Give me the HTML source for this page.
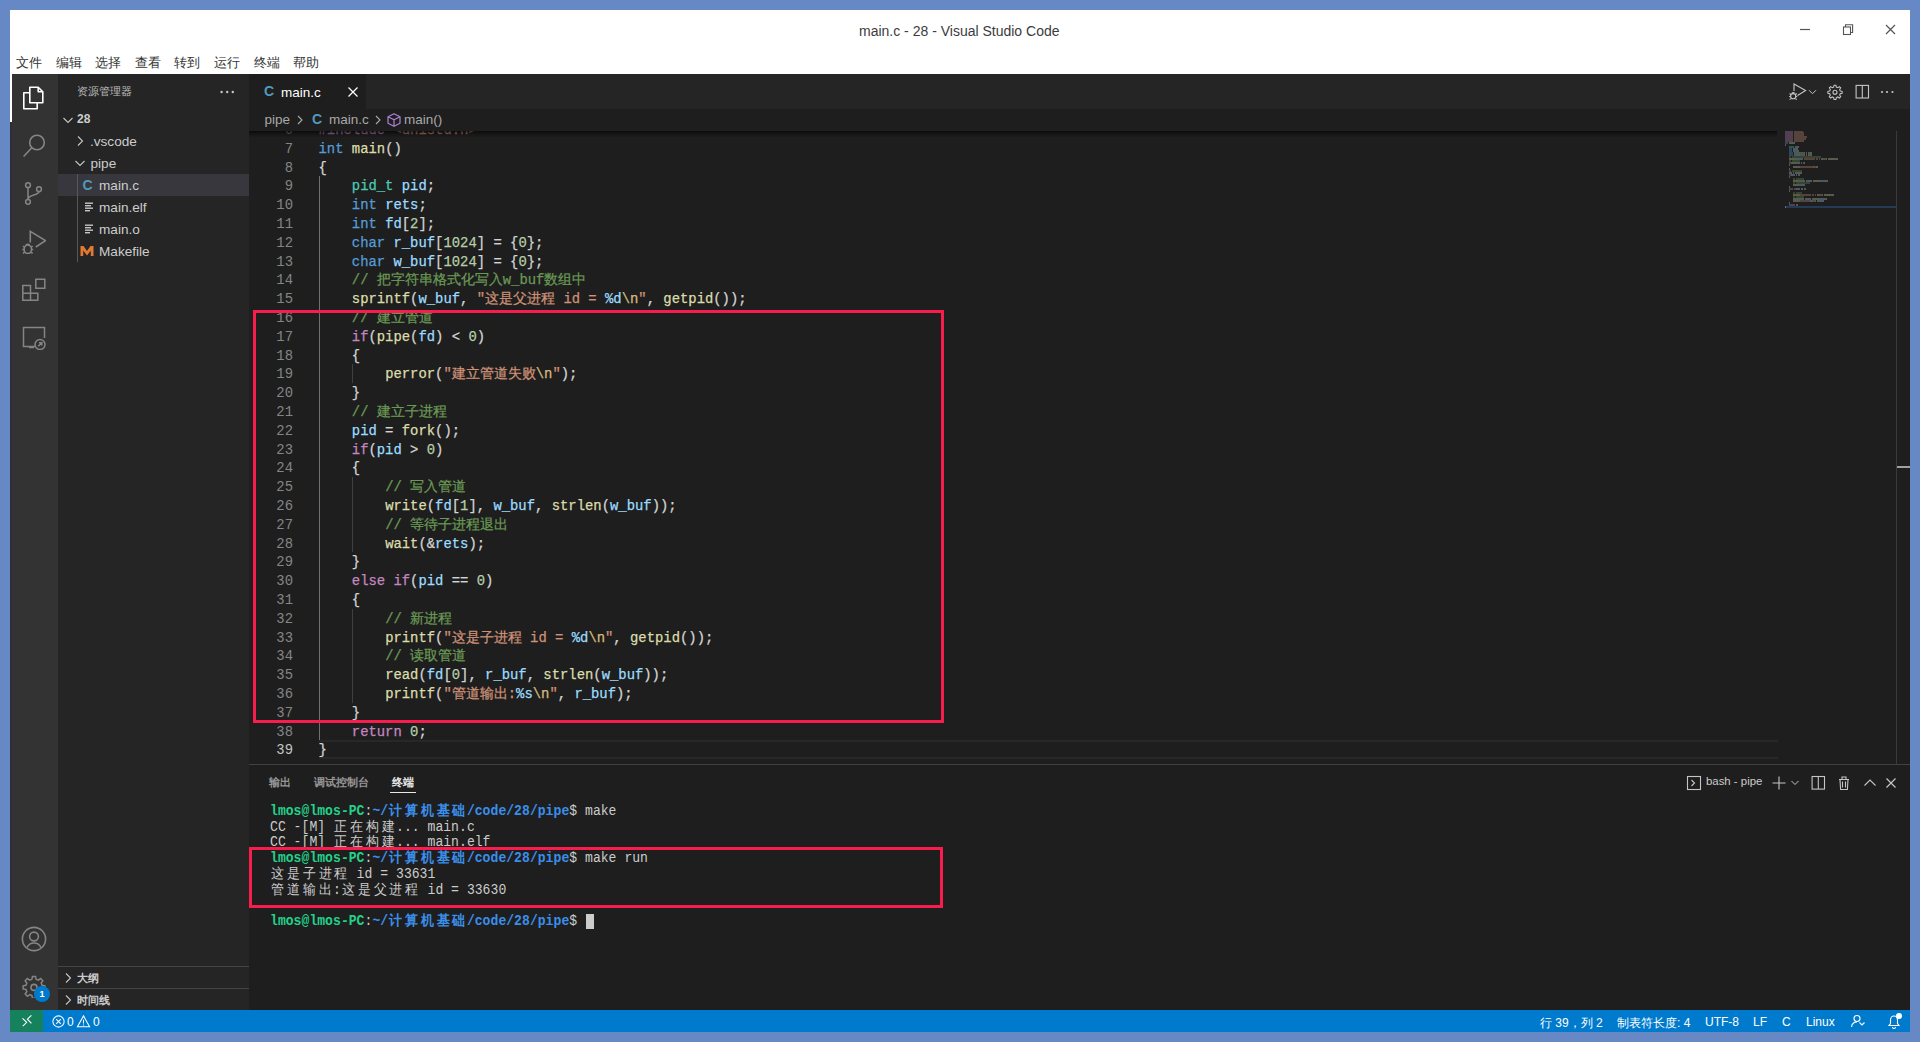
<!DOCTYPE html>
<html><head><meta charset="utf-8">
<style>
*{box-sizing:border-box;margin:0;padding:0}
html,body{width:1920px;height:1042px;overflow:hidden;background:#6689c6;font-family:"Liberation Sans",sans-serif}
.abs{position:absolute}
#win{position:absolute;left:10px;top:10px;width:1900px;height:1022px;background:#1e1e1e;overflow:hidden}
#titlebar{position:absolute;left:0;top:0;width:1900px;height:64px;background:#ffffff}
#title{position:absolute;left:849px;top:13px;font-size:14px;color:#3c3c3c;white-space:nowrap}
.menu{position:absolute;top:43.5px;font-size:13.4px;color:#333;white-space:nowrap}
#actbar{position:absolute;left:0;top:64px;width:48px;height:936px;background:#333333}
#sidebar{position:absolute;left:48px;top:64px;width:191px;height:936px;background:#252526;color:#cccccc;font-size:13.6px}
.row{position:absolute;left:0;width:191px;height:22px;white-space:nowrap}
.row span{position:absolute;top:4px}
#editor{position:absolute;left:239px;top:64px;width:1661px;height:691px;background:#1e1e1e}
#tabs{position:absolute;left:0;top:0;width:1661px;height:35px;background:#252526}
#tab{position:absolute;left:0;top:0;width:117px;height:35px;background:#1e1e1e}
#crumbs{position:absolute;left:0;top:35px;width:1661px;height:22px;background:#1e1e1e;color:#a9a9a9;font-size:13px;white-space:nowrap}
#codeview{position:absolute;left:0;top:57px;width:1661px;height:634px;overflow:hidden}
.ln{position:absolute;left:0;width:44px;height:18.8px;text-align:right;font-family:"Liberation Mono",monospace;font-size:13.88px;line-height:18.8px;padding-top:1px}
.cl{position:absolute;left:69.5px;height:18.8px;white-space:pre;font-family:"Liberation Mono",monospace;font-size:13.88px;line-height:18.8px;padding-top:1px;color:#d4d4d4;-webkit-text-stroke:0.25px currentColor}
#panel{position:absolute;left:239px;top:754px;width:1661px;height:246px;background:#1e1e1e;border-top:1px solid #414141}
.ptab{position:absolute;top:10px;font-size:11px;color:#969696;white-space:nowrap;font-weight:bold}
#term{position:absolute;left:21px;top:38px;width:1600px;height:200px}
.tl{position:absolute;left:0;height:15.7px;width:1600px;transform-origin:0 12px;transform:translateY(1.5px) scaleY(1.08)}
.tc{position:absolute;top:0;height:15.7px;text-align:center;font-family:"Liberation Mono",monospace;font-size:13.1px;line-height:15.7px;white-space:pre}
#status{position:absolute;left:0;top:1000px;width:1900px;height:22px;background:#007acc;color:#ffffff;font-size:12px;white-space:nowrap}
.st{position:absolute;top:5px}
.redbox{position:absolute;border:3px solid #fa1c4c}
</style></head>
<body>
<div id="win">
  <div id="titlebar">
    <div id="title">main.c - 28 - Visual Studio Code</div>
    <div class="menu" style="left:6px">文件</div>
    <div class="menu" style="left:45.6px">编辑</div>
    <div class="menu" style="left:85.2px">选择</div>
    <div class="menu" style="left:124.8px">查看</div>
    <div class="menu" style="left:164.4px">转到</div>
    <div class="menu" style="left:204px">运行</div>
    <div class="menu" style="left:243.6px">终端</div>
    <div class="menu" style="left:283.2px">帮助</div>
    <!-- window controls -->
    <svg class="abs" style="left:1788px;top:14px" width="16" height="16" viewBox="0 0 16 16"><path d="M2 5.5H12" stroke="#555" stroke-width="1.2"/></svg>
    <svg class="abs" style="left:1830px;top:12px" width="16" height="16" viewBox="0 0 16 16" fill="none" stroke="#555" stroke-width="1.1"><rect x="3.5" y="5" width="7" height="7.5"/><path d="M5.5 5V2.8H12.6V10.5H10.5"/></svg>
    <svg class="abs" style="left:1872px;top:12px" width="16" height="16" viewBox="0 0 16 16" stroke="#555" stroke-width="1.2"><path d="M4 3L13 12M13 3L4 12"/></svg>
  </div>

  <div id="actbar"><div class="abs" style="left:0;top:48px;width:2px;height:888px;background:#2c2f3a"></div>
    <div class="abs" style="left:0;top:0;width:2px;height:48px;background:#ffffff"></div>
    <svg class="abs" style="left:12px;top:12px" width="24" height="24" viewBox="0 0 24 24" fill="none" stroke="#ffffff" stroke-width="1.6" stroke-linejoin="round"><path d="M7.8 1.2H16.2L20.8 5.8V16.7H7.8Z"/><path d="M16.2 1.2V5.8H20.8"/><path d="M7.8 6.8H1.8V22.8H15.2V16.7"/></svg>
    <svg class="abs" style="left:12px;top:60px" width="24" height="24" viewBox="0 0 24 24" fill="none" stroke="#858585" stroke-width="1.6"><circle cx="15" cy="8.5" r="7.3"/><path d="M9.8 13.7L1.6 22.5"/></svg>
    <svg class="abs" style="left:12px;top:108px" width="24" height="24" viewBox="0 0 24 24" fill="none" stroke="#858585" stroke-width="1.5"><circle cx="6" cy="3.2" r="2.4"/><circle cx="6" cy="19.8" r="2.4"/><circle cx="17" cy="7.2" r="2.4"/><path d="M6 5.6V17.4M17 9.6C17 13.5 6 12.5 6 17.4"/></svg>
    <svg class="abs" style="left:12px;top:156px" width="24" height="24" viewBox="0 0 24 24" fill="none" stroke="#858585" stroke-width="1.6"><path d="M8.3 12.5V1.4L23.5 10.6L13.8 17"/><ellipse cx="5.8" cy="19.3" rx="3.7" ry="4.3"/><path d="M3.8 15.4Q5.8 13 7.8 15.4M1 16.2L2.5 17.2M10.6 16.2L9.1 17.2M0.4 19.5H2M9.6 19.5H11.2M1 23.4L2.5 22.2M10.6 23.4L9.1 22.2"/></svg>
    <svg class="abs" style="left:12px;top:204px" width="24" height="24" viewBox="0 0 24 24" fill="none" stroke="#858585" stroke-width="1.5"><path d="M0.8 7.5H8.5V15.2H0.8ZM0.8 15.2H8.5V22.2H0.8ZM8.5 15.2H15.8V22.2H8.5Z"/><path d="M13.8 1.2H22.8V10.2H13.8Z"/></svg>
    <svg class="abs" style="left:12px;top:252px" width="24" height="24" viewBox="0 0 24 24" fill="none" stroke="#858585" stroke-width="1.5"><path d="M13 20.5H1.5V1.5H22.5V12"/><path d="M7 21.5H12"/><circle cx="18" cy="18.5" r="5"/><path d="M16.2 20.3L19.8 16.7M17 16.7H19.8V19.5"/></svg>
    <svg class="abs" style="left:10px;top:851px" width="28" height="28" viewBox="0 0 28 28" fill="none" stroke="#858585" stroke-width="1.6"><circle cx="14" cy="14" r="11.6"/><circle cx="14" cy="11.5" r="4.4"/><path d="M7 22.6A7.6 7.6 0 0 1 21 22.6"/></svg>
    <svg class="abs" style="left:11.5px;top:899.5px" width="24" height="24" viewBox="0 0 24 24" fill="none" stroke="#858585" stroke-width="1.6"><path d="M10.3 1.5H13.7L14.3 4.6L16.6 5.6L19.2 3.8L21.6 6.2L19.8 8.8L20.8 11.1L23.8 11.7V15.1L20.8 15.7L19.8 18L21.6 20.6L19.2 23L16.6 21.2L14.3 22.2L13.7 25.3H10.3L9.7 22.2L7.4 21.2L4.8 23L2.4 20.6L4.2 18L3.2 15.7L0.2 15.1V11.7L3.2 11.1L4.2 8.8L2.4 6.2L4.8 3.8L7.4 5.6L9.7 4.6Z" transform="translate(12 13.4) scale(0.92) translate(-12 -13.4)"/><circle cx="12" cy="13.4" r="3"/></svg>
    <div class="abs" style="left:24px;top:912px;width:16px;height:16px;border-radius:8px;background:#007acc;color:#fff;font-size:9px;font-weight:bold;text-align:center;line-height:16px">1</div>
  </div>

  <div id="sidebar">
    <div class="abs" style="left:19px;top:10px;font-size:11px;color:#bbbbbb;white-space:nowrap">资源管理器</div>
    <svg class="abs" style="left:160px;top:10px" width="20" height="16" viewBox="0 0 20 16" fill="#c5c5c5"><circle cx="3.6" cy="8" r="1.2"/><circle cx="9.2" cy="8" r="1.2"/><circle cx="14.8" cy="8" r="1.2"/></svg>
    <div class="row" style="top:34px">
      <svg class="abs" style="left:1.5px;top:3.5px" width="16" height="16" viewBox="0 0 16 16" fill="none" stroke="#c5c5c5" stroke-width="1.1"><path d="M3.5 6L8 10.5L12.5 6"/></svg>
      <span style="left:19px;font-weight:bold;font-size:12px;top:4px">28</span></div>
    <div class="row" style="top:56px">
      <svg class="abs" style="left:14px;top:3px" width="16" height="16" viewBox="0 0 16 16" fill="none" stroke="#c5c5c5" stroke-width="1.1"><path d="M6 3.5L10.5 8L6 12.5"/></svg>
      <span style="left:32px">.vscode</span></div>
    <div class="row" style="top:78px">
      <svg class="abs" style="left:14px;top:3px" width="16" height="16" viewBox="0 0 16 16" fill="none" stroke="#c5c5c5" stroke-width="1.1"><path d="M3.5 6L8 10.5L12.5 6"/></svg>
      <span style="left:32.5px">pipe</span></div>
    <div class="row" style="top:100px;background:#37373d">
      <span style="left:24.5px;color:#519aba;font-weight:bold;font-size:14px;top:2.5px">C</span>
      <span style="left:41px">main.c</span></div>
    <div class="row" style="top:122px">
      <svg class="abs" style="left:26px;top:4.5px" width="12" height="12" viewBox="0 0 12 12" fill="#c5c5c5"><rect x="1" y="1.5" width="8" height="1.4"/><rect x="1" y="4" width="6" height="1.4"/><rect x="1" y="6.5" width="8" height="1.4"/><rect x="1" y="9" width="5" height="1.4"/></svg>
      <span style="left:41px">main.elf</span></div>
    <div class="row" style="top:144px">
      <svg class="abs" style="left:26px;top:4.5px" width="12" height="12" viewBox="0 0 12 12" fill="#c5c5c5"><rect x="1" y="1.5" width="8" height="1.4"/><rect x="1" y="4" width="6" height="1.4"/><rect x="1" y="6.5" width="8" height="1.4"/><rect x="1" y="9" width="5" height="1.4"/></svg>
      <span style="left:41px">main.o</span></div>
    <div class="row" style="top:166px">
      <svg class="abs" style="left:22px;top:5px" width="14" height="12" viewBox="0 0 14 12" fill="#e37933"><path d="M0.5 11V1H3.5L7 6L10.5 1H13.5V11H10.8V5.5L7 10.5L3.2 5.5V11Z"/></svg>
      <span style="left:41px">Makefile</span></div>
    <div class="abs" style="left:19px;top:100px;width:1px;height:88px;background:#585858"></div>
    <div class="abs" style="left:0;top:892px;width:191px;height:1px;background:#454545"></div>
    <div class="row" style="top:893px">
      <svg class="abs" style="left:2px;top:3px" width="16" height="16" viewBox="0 0 16 16" fill="none" stroke="#c5c5c5" stroke-width="1.1"><path d="M6 3.5L10.5 8L6 12.5"/></svg>
      <span style="left:19px;font-weight:bold;font-size:11px;top:4px">大纲</span></div>
    <div class="abs" style="left:0;top:914px;width:191px;height:1px;background:#454545"></div>
    <div class="row" style="top:915px">
      <svg class="abs" style="left:2px;top:3px" width="16" height="16" viewBox="0 0 16 16" fill="none" stroke="#c5c5c5" stroke-width="1.1"><path d="M6 3.5L10.5 8L6 12.5"/></svg>
      <span style="left:19px;font-weight:bold;font-size:11px;top:4px">时间线</span></div>
  </div>

  <div id="editor">
    <div id="tabs">
      <div id="tab">
        <span class="abs" style="left:15px;top:9px;color:#519aba;font-weight:bold;font-size:14px">C</span>
        <span class="abs" style="left:32px;top:10.5px;color:#ffffff;font-size:13.5px">main.c</span>
        <svg class="abs" style="left:96px;top:10px" width="16" height="16" viewBox="0 0 16 16" fill="none" stroke="#ffffff" stroke-width="1.2"><path d="M3.5 3.5L12.5 12.5M12.5 3.5L3.5 12.5"/></svg>
      </div>
      <svg class="abs" style="left:1537px;top:8px" width="22" height="20" viewBox="0 0 22 20" fill="none" stroke="#c5c5c5" stroke-width="1.1"><path d="M8 9V2L19.6 8.5L11.5 13.5"/><circle cx="7.2" cy="14.2" r="2.6"/><path d="M3.6 11.5L5 12.6M10.8 11.5L9.4 12.6M3.2 14.5H4.5M9.9 14.5H11.2M3.6 17.6L5 16.6M10.8 17.6L9.4 16.6M5.8 11.2Q7.2 10 8.6 11.2"/></svg>
      <svg class="abs" style="left:1558px;top:8px" width="12" height="20" viewBox="0 0 12 20" fill="none" stroke="#c5c5c5" stroke-width="1"><path d="M2 8.2L5.5 11.7L9 8.2"/></svg>
      <svg class="abs" style="left:1578.3px;top:10px" width="16" height="16" viewBox="0 0 16 16" fill="none" stroke="#c5c5c5" stroke-width="1.1"><path d="M7 0.8H9L9.4 2.8L10.9 3.4L12.6 2.3L14 3.7L12.9 5.4L13.5 6.9L15.5 7.3V9.3L13.5 9.7L12.9 11.2L14 12.9L12.6 14.3L10.9 13.2L9.4 13.8L9 15.8H7L6.6 13.8L5.1 13.2L3.4 14.3L2 12.9L3.1 11.2L2.5 9.7L0.5 9.3V7.3L2.5 6.9L3.1 5.4L2 3.7L3.4 2.3L5.1 3.4L6.6 2.8Z" transform="translate(8 8.3) scale(0.95) translate(-8 -8.3)"/><circle cx="8" cy="8.3" r="2"/></svg>
      <svg class="abs" style="left:1606px;top:10px" width="16" height="16" viewBox="0 0 16 16" fill="none" stroke="#c5c5c5" stroke-width="1.1"><rect x="1.1" y="1.4" width="12.4" height="12.6"/><path d="M7.3 1.4V14"/></svg>
      <svg class="abs" style="left:1627px;top:10px" width="20" height="16" viewBox="0 0 20 16" fill="#c5c5c5"><circle cx="6" cy="8" r="1.1"/><circle cx="11" cy="8" r="1.1"/><circle cx="16.5" cy="8" r="1.1"/></svg>
    </div>
    <div id="crumbs"><span class="abs" style="left:15.5px;top:2.5px;font-size:13.5px">pipe</span>
      <svg class="abs" style="left:42.5px;top:3px" width="16" height="16" viewBox="0 0 16 16" fill="none" stroke="#a9a9a9" stroke-width="1.1"><path d="M6 4L10 8L6 12"/></svg>
      <span class="abs" style="left:63px;top:2px;color:#519aba;font-weight:bold;font-size:14px">C</span>
      <span class="abs" style="left:80px;top:2.5px;font-size:13.5px">main.c</span>
      <svg class="abs" style="left:121px;top:3px" width="16" height="16" viewBox="0 0 16 16" fill="none" stroke="#a9a9a9" stroke-width="1.1"><path d="M6 4L10 8L6 12"/></svg>
      <svg class="abs" style="left:137px;top:3px" width="16" height="16" viewBox="0 0 16 16" fill="none" stroke="#b180d7" stroke-width="1.2" stroke-linejoin="round"><path d="M8 1.8L14 4.8V11.2L8 14.2L2 11.2V4.8Z"/><path d="M2 4.8L8 7.8L14 4.8M8 7.8V14.2"/></svg>
      <span class="abs" style="left:155px;top:2.5px;font-size:13.5px">main()</span></div>
    <div id="codeview">
      <div style="position:absolute;left:70.00px;top:45.40px;width:1px;height:564.00px;background:#707070"></div><div style="position:absolute;left:103.00px;top:233.40px;width:1px;height:18.80px;background:#404040"></div><div style="position:absolute;left:103.00px;top:346.20px;width:1px;height:75.20px;background:#404040"></div><div style="position:absolute;left:103.00px;top:477.80px;width:1px;height:94.00px;background:#404040"></div>
      <div class="ln" style="top:-11.00px;color:#858585;opacity:.75">6</div><div class="cl" style="top:-11.00px;opacity:.75"><span style="color:#c586c0">#include</span><span style="color:#d4d4d4"> </span><span style="color:#ce9178">&lt;unistd.h&gt;</span></div>
<div class="ln" style="top:7.80px;color:#858585">7</div><div class="cl" style="top:7.80px"><span style="color:#569cd6">int</span><span style="color:#d4d4d4"> </span><span style="color:#dcdcaa">main</span><span style="color:#d4d4d4">()</span></div>
<div class="ln" style="top:26.60px;color:#858585">8</div><div class="cl" style="top:26.60px"><span style="color:#d4d4d4">{</span></div>
<div class="ln" style="top:45.40px;color:#858585">9</div><div class="cl" style="top:45.40px"><span style="color:#d4d4d4">    </span><span style="color:#4ec9b0">pid_t</span><span style="color:#d4d4d4"> </span><span style="color:#9cdcfe">pid</span><span style="color:#d4d4d4">;</span></div>
<div class="ln" style="top:64.20px;color:#858585">10</div><div class="cl" style="top:64.20px"><span style="color:#d4d4d4">    </span><span style="color:#569cd6">int</span><span style="color:#d4d4d4"> </span><span style="color:#9cdcfe">rets</span><span style="color:#d4d4d4">;</span></div>
<div class="ln" style="top:83.00px;color:#858585">11</div><div class="cl" style="top:83.00px"><span style="color:#d4d4d4">    </span><span style="color:#569cd6">int</span><span style="color:#d4d4d4"> </span><span style="color:#9cdcfe">fd</span><span style="color:#d4d4d4">[</span><span style="color:#b5cea8">2</span><span style="color:#d4d4d4">];</span></div>
<div class="ln" style="top:101.80px;color:#858585">12</div><div class="cl" style="top:101.80px"><span style="color:#d4d4d4">    </span><span style="color:#569cd6">char</span><span style="color:#d4d4d4"> </span><span style="color:#9cdcfe">r_buf</span><span style="color:#d4d4d4">[</span><span style="color:#b5cea8">1024</span><span style="color:#d4d4d4">] = {</span><span style="color:#b5cea8">0</span><span style="color:#d4d4d4">};</span></div>
<div class="ln" style="top:120.60px;color:#858585">13</div><div class="cl" style="top:120.60px"><span style="color:#d4d4d4">    </span><span style="color:#569cd6">char</span><span style="color:#d4d4d4"> </span><span style="color:#9cdcfe">w_buf</span><span style="color:#d4d4d4">[</span><span style="color:#b5cea8">1024</span><span style="color:#d4d4d4">] = {</span><span style="color:#b5cea8">0</span><span style="color:#d4d4d4">};</span></div>
<div class="ln" style="top:139.40px;color:#858585">14</div><div class="cl" style="top:139.40px"><span style="color:#d4d4d4">    </span><span style="color:#6a9955">// 把字符串格式化写入w_buf数组中</span></div>
<div class="ln" style="top:158.20px;color:#858585">15</div><div class="cl" style="top:158.20px"><span style="color:#d4d4d4">    </span><span style="color:#dcdcaa">sprintf</span><span style="color:#d4d4d4">(</span><span style="color:#9cdcfe">w_buf</span><span style="color:#d4d4d4">, </span><span style="color:#ce9178">&quot;这是父进程 id = </span><span style="color:#9cdcfe">%d</span><span style="color:#d7ba7d">\n</span><span style="color:#ce9178">&quot;</span><span style="color:#d4d4d4">, </span><span style="color:#dcdcaa">getpid</span><span style="color:#d4d4d4">());</span></div>
<div class="ln" style="top:177.00px;color:#858585">16</div><div class="cl" style="top:177.00px"><span style="color:#d4d4d4">    </span><span style="color:#6a9955">// 建立管道</span></div>
<div class="ln" style="top:195.80px;color:#858585">17</div><div class="cl" style="top:195.80px"><span style="color:#d4d4d4">    </span><span style="color:#c586c0">if</span><span style="color:#d4d4d4">(</span><span style="color:#dcdcaa">pipe</span><span style="color:#d4d4d4">(</span><span style="color:#9cdcfe">fd</span><span style="color:#d4d4d4">) &lt; </span><span style="color:#b5cea8">0</span><span style="color:#d4d4d4">)</span></div>
<div class="ln" style="top:214.60px;color:#858585">18</div><div class="cl" style="top:214.60px"><span style="color:#d4d4d4">    {</span></div>
<div class="ln" style="top:233.40px;color:#858585">19</div><div class="cl" style="top:233.40px"><span style="color:#d4d4d4">        </span><span style="color:#dcdcaa">perror</span><span style="color:#d4d4d4">(</span><span style="color:#ce9178">&quot;建立管道失败</span><span style="color:#d7ba7d">\n</span><span style="color:#ce9178">&quot;</span><span style="color:#d4d4d4">);</span></div>
<div class="ln" style="top:252.20px;color:#858585">20</div><div class="cl" style="top:252.20px"><span style="color:#d4d4d4">    }</span></div>
<div class="ln" style="top:271.00px;color:#858585">21</div><div class="cl" style="top:271.00px"><span style="color:#d4d4d4">    </span><span style="color:#6a9955">// 建立子进程</span></div>
<div class="ln" style="top:289.80px;color:#858585">22</div><div class="cl" style="top:289.80px"><span style="color:#d4d4d4">    </span><span style="color:#9cdcfe">pid</span><span style="color:#d4d4d4"> = </span><span style="color:#dcdcaa">fork</span><span style="color:#d4d4d4">();</span></div>
<div class="ln" style="top:308.60px;color:#858585">23</div><div class="cl" style="top:308.60px"><span style="color:#d4d4d4">    </span><span style="color:#c586c0">if</span><span style="color:#d4d4d4">(</span><span style="color:#9cdcfe">pid</span><span style="color:#d4d4d4"> &gt; </span><span style="color:#b5cea8">0</span><span style="color:#d4d4d4">)</span></div>
<div class="ln" style="top:327.40px;color:#858585">24</div><div class="cl" style="top:327.40px"><span style="color:#d4d4d4">    {</span></div>
<div class="ln" style="top:346.20px;color:#858585">25</div><div class="cl" style="top:346.20px"><span style="color:#d4d4d4">        </span><span style="color:#6a9955">// 写入管道</span></div>
<div class="ln" style="top:365.00px;color:#858585">26</div><div class="cl" style="top:365.00px"><span style="color:#d4d4d4">        </span><span style="color:#dcdcaa">write</span><span style="color:#d4d4d4">(</span><span style="color:#9cdcfe">fd</span><span style="color:#d4d4d4">[</span><span style="color:#b5cea8">1</span><span style="color:#d4d4d4">], </span><span style="color:#9cdcfe">w_buf</span><span style="color:#d4d4d4">, </span><span style="color:#dcdcaa">strlen</span><span style="color:#d4d4d4">(</span><span style="color:#9cdcfe">w_buf</span><span style="color:#d4d4d4">));</span></div>
<div class="ln" style="top:383.80px;color:#858585">27</div><div class="cl" style="top:383.80px"><span style="color:#d4d4d4">        </span><span style="color:#6a9955">// 等待子进程退出</span></div>
<div class="ln" style="top:402.60px;color:#858585">28</div><div class="cl" style="top:402.60px"><span style="color:#d4d4d4">        </span><span style="color:#dcdcaa">wait</span><span style="color:#d4d4d4">(&amp;</span><span style="color:#9cdcfe">rets</span><span style="color:#d4d4d4">);</span></div>
<div class="ln" style="top:421.40px;color:#858585">29</div><div class="cl" style="top:421.40px"><span style="color:#d4d4d4">    }</span></div>
<div class="ln" style="top:440.20px;color:#858585">30</div><div class="cl" style="top:440.20px"><span style="color:#d4d4d4">    </span><span style="color:#c586c0">else</span><span style="color:#d4d4d4"> </span><span style="color:#c586c0">if</span><span style="color:#d4d4d4">(</span><span style="color:#9cdcfe">pid</span><span style="color:#d4d4d4"> == </span><span style="color:#b5cea8">0</span><span style="color:#d4d4d4">)</span></div>
<div class="ln" style="top:459.00px;color:#858585">31</div><div class="cl" style="top:459.00px"><span style="color:#d4d4d4">    {</span></div>
<div class="ln" style="top:477.80px;color:#858585">32</div><div class="cl" style="top:477.80px"><span style="color:#d4d4d4">        </span><span style="color:#6a9955">// 新进程</span></div>
<div class="ln" style="top:496.60px;color:#858585">33</div><div class="cl" style="top:496.60px"><span style="color:#d4d4d4">        </span><span style="color:#dcdcaa">printf</span><span style="color:#d4d4d4">(</span><span style="color:#ce9178">&quot;这是子进程 id = </span><span style="color:#9cdcfe">%d</span><span style="color:#d7ba7d">\n</span><span style="color:#ce9178">&quot;</span><span style="color:#d4d4d4">, </span><span style="color:#dcdcaa">getpid</span><span style="color:#d4d4d4">());</span></div>
<div class="ln" style="top:515.40px;color:#858585">34</div><div class="cl" style="top:515.40px"><span style="color:#d4d4d4">        </span><span style="color:#6a9955">// 读取管道</span></div>
<div class="ln" style="top:534.20px;color:#858585">35</div><div class="cl" style="top:534.20px"><span style="color:#d4d4d4">        </span><span style="color:#dcdcaa">read</span><span style="color:#d4d4d4">(</span><span style="color:#9cdcfe">fd</span><span style="color:#d4d4d4">[</span><span style="color:#b5cea8">0</span><span style="color:#d4d4d4">], </span><span style="color:#9cdcfe">r_buf</span><span style="color:#d4d4d4">, </span><span style="color:#dcdcaa">strlen</span><span style="color:#d4d4d4">(</span><span style="color:#9cdcfe">w_buf</span><span style="color:#d4d4d4">));</span></div>
<div class="ln" style="top:553.00px;color:#858585">36</div><div class="cl" style="top:553.00px"><span style="color:#d4d4d4">        </span><span style="color:#dcdcaa">printf</span><span style="color:#d4d4d4">(</span><span style="color:#ce9178">&quot;管道输出:</span><span style="color:#9cdcfe">%s</span><span style="color:#d7ba7d">\n</span><span style="color:#ce9178">&quot;</span><span style="color:#d4d4d4">, </span><span style="color:#9cdcfe">r_buf</span><span style="color:#d4d4d4">);</span></div>
<div class="ln" style="top:571.80px;color:#858585">37</div><div class="cl" style="top:571.80px"><span style="color:#d4d4d4">    }</span></div>
<div class="ln" style="top:590.60px;color:#858585">38</div><div class="cl" style="top:590.60px"><span style="color:#d4d4d4">    </span><span style="color:#c586c0">return</span><span style="color:#d4d4d4"> </span><span style="color:#b5cea8">0</span><span style="color:#d4d4d4">;</span></div>
<div class="ln" style="top:609.40px;color:#c6c6c6">39</div><div class="cl" style="top:609.40px"><span style="color:#d4d4d4">}</span></div>
      <div style="position:absolute;left:70px;top:609.3px;width:1459px;height:19px;border-top:2px solid #282828;border-bottom:2px solid #282828"></div>
      <div style="position:absolute;left:1647px;top:0;width:1px;height:634px;background:#3a3a3a"></div>
      <div style="position:absolute;left:1648px;top:335px;width:13px;height:2px;background:#a0a0a0"></div>
      <div style="position:absolute;left:1536px;top:74.5px;width:111px;height:2px;background:#264f78;opacity:.6"></div>
      <div id="mm" style="position:absolute;left:0;top:0"><div style="position:absolute;left:1536px;top:-1px;width:8px;height:2px;background:#c586c0;opacity:.32"></div><div style="position:absolute;left:1545px;top:-1px;width:9px;height:2px;background:#ce9178;opacity:.32"></div><div style="position:absolute;left:1536px;top:1px;width:8px;height:2px;background:#c586c0;opacity:.32"></div><div style="position:absolute;left:1545px;top:1px;width:10px;height:2px;background:#ce9178;opacity:.32"></div><div style="position:absolute;left:1536px;top:3px;width:8px;height:2px;background:#c586c0;opacity:.32"></div><div style="position:absolute;left:1545px;top:3px;width:10px;height:2px;background:#ce9178;opacity:.32"></div><div style="position:absolute;left:1536px;top:5px;width:8px;height:2px;background:#c586c0;opacity:.32"></div><div style="position:absolute;left:1545px;top:5px;width:13px;height:2px;background:#ce9178;opacity:.32"></div><div style="position:absolute;left:1536px;top:7px;width:8px;height:2px;background:#c586c0;opacity:.32"></div><div style="position:absolute;left:1545px;top:7px;width:12px;height:2px;background:#ce9178;opacity:.32"></div><div style="position:absolute;left:1536px;top:9px;width:8px;height:2px;background:#c586c0;opacity:.32"></div><div style="position:absolute;left:1545px;top:9px;width:10px;height:2px;background:#ce9178;opacity:.32"></div><div style="position:absolute;left:1536px;top:11px;width:3px;height:2px;background:#569cd6;opacity:.32"></div><div style="position:absolute;left:1540px;top:11px;width:4px;height:2px;background:#dcdcaa;opacity:.32"></div><div style="position:absolute;left:1544px;top:11px;width:2px;height:2px;background:#d4d4d4;opacity:.32"></div><div style="position:absolute;left:1536px;top:13px;width:1px;height:2px;background:#d4d4d4;opacity:.32"></div><div style="position:absolute;left:1540px;top:15px;width:5px;height:2px;background:#4ec9b0;opacity:.32"></div><div style="position:absolute;left:1546px;top:15px;width:3px;height:2px;background:#9cdcfe;opacity:.32"></div><div style="position:absolute;left:1549px;top:15px;width:1px;height:2px;background:#d4d4d4;opacity:.32"></div><div style="position:absolute;left:1540px;top:17px;width:3px;height:2px;background:#569cd6;opacity:.32"></div><div style="position:absolute;left:1544px;top:17px;width:4px;height:2px;background:#9cdcfe;opacity:.32"></div><div style="position:absolute;left:1548px;top:17px;width:1px;height:2px;background:#d4d4d4;opacity:.32"></div><div style="position:absolute;left:1540px;top:19px;width:3px;height:2px;background:#569cd6;opacity:.32"></div><div style="position:absolute;left:1544px;top:19px;width:2px;height:2px;background:#9cdcfe;opacity:.32"></div><div style="position:absolute;left:1546px;top:19px;width:1px;height:2px;background:#d4d4d4;opacity:.32"></div><div style="position:absolute;left:1547px;top:19px;width:1px;height:2px;background:#b5cea8;opacity:.32"></div><div style="position:absolute;left:1548px;top:19px;width:2px;height:2px;background:#d4d4d4;opacity:.32"></div><div style="position:absolute;left:1540px;top:21px;width:4px;height:2px;background:#569cd6;opacity:.32"></div><div style="position:absolute;left:1545px;top:21px;width:5px;height:2px;background:#9cdcfe;opacity:.32"></div><div style="position:absolute;left:1550px;top:21px;width:1px;height:2px;background:#d4d4d4;opacity:.32"></div><div style="position:absolute;left:1551px;top:21px;width:4px;height:2px;background:#b5cea8;opacity:.32"></div><div style="position:absolute;left:1555px;top:21px;width:1px;height:2px;background:#d4d4d4;opacity:.32"></div><div style="position:absolute;left:1557px;top:21px;width:1px;height:2px;background:#d4d4d4;opacity:.32"></div><div style="position:absolute;left:1559px;top:21px;width:1px;height:2px;background:#d4d4d4;opacity:.32"></div><div style="position:absolute;left:1560px;top:21px;width:1px;height:2px;background:#b5cea8;opacity:.32"></div><div style="position:absolute;left:1561px;top:21px;width:2px;height:2px;background:#d4d4d4;opacity:.32"></div><div style="position:absolute;left:1540px;top:23px;width:4px;height:2px;background:#569cd6;opacity:.32"></div><div style="position:absolute;left:1545px;top:23px;width:5px;height:2px;background:#9cdcfe;opacity:.32"></div><div style="position:absolute;left:1550px;top:23px;width:1px;height:2px;background:#d4d4d4;opacity:.32"></div><div style="position:absolute;left:1551px;top:23px;width:4px;height:2px;background:#b5cea8;opacity:.32"></div><div style="position:absolute;left:1555px;top:23px;width:1px;height:2px;background:#d4d4d4;opacity:.32"></div><div style="position:absolute;left:1557px;top:23px;width:1px;height:2px;background:#d4d4d4;opacity:.32"></div><div style="position:absolute;left:1559px;top:23px;width:1px;height:2px;background:#d4d4d4;opacity:.32"></div><div style="position:absolute;left:1560px;top:23px;width:1px;height:2px;background:#b5cea8;opacity:.32"></div><div style="position:absolute;left:1561px;top:23px;width:2px;height:2px;background:#d4d4d4;opacity:.32"></div><div style="position:absolute;left:1540px;top:25px;width:2px;height:2px;background:#6a9955;opacity:.32"></div><div style="position:absolute;left:1543px;top:25px;width:29px;height:2px;background:#6a9955;opacity:.32"></div><div style="position:absolute;left:1540px;top:27px;width:7px;height:2px;background:#dcdcaa;opacity:.32"></div><div style="position:absolute;left:1547px;top:27px;width:1px;height:2px;background:#d4d4d4;opacity:.32"></div><div style="position:absolute;left:1548px;top:27px;width:5px;height:2px;background:#9cdcfe;opacity:.32"></div><div style="position:absolute;left:1553px;top:27px;width:1px;height:2px;background:#d4d4d4;opacity:.32"></div><div style="position:absolute;left:1555px;top:27px;width:11px;height:2px;background:#ce9178;opacity:.32"></div><div style="position:absolute;left:1567px;top:27px;width:2px;height:2px;background:#ce9178;opacity:.32"></div><div style="position:absolute;left:1570px;top:27px;width:1px;height:2px;background:#ce9178;opacity:.32"></div><div style="position:absolute;left:1572px;top:27px;width:2px;height:2px;background:#9cdcfe;opacity:.32"></div><div style="position:absolute;left:1574px;top:27px;width:2px;height:2px;background:#d7ba7d;opacity:.32"></div><div style="position:absolute;left:1576px;top:27px;width:1px;height:2px;background:#ce9178;opacity:.32"></div><div style="position:absolute;left:1577px;top:27px;width:1px;height:2px;background:#d4d4d4;opacity:.32"></div><div style="position:absolute;left:1579px;top:27px;width:6px;height:2px;background:#dcdcaa;opacity:.32"></div><div style="position:absolute;left:1585px;top:27px;width:4px;height:2px;background:#d4d4d4;opacity:.32"></div><div style="position:absolute;left:1540px;top:29px;width:2px;height:2px;background:#6a9955;opacity:.32"></div><div style="position:absolute;left:1543px;top:29px;width:8px;height:2px;background:#6a9955;opacity:.32"></div><div style="position:absolute;left:1540px;top:31px;width:2px;height:2px;background:#c586c0;opacity:.32"></div><div style="position:absolute;left:1542px;top:31px;width:1px;height:2px;background:#d4d4d4;opacity:.32"></div><div style="position:absolute;left:1543px;top:31px;width:4px;height:2px;background:#dcdcaa;opacity:.32"></div><div style="position:absolute;left:1547px;top:31px;width:1px;height:2px;background:#d4d4d4;opacity:.32"></div><div style="position:absolute;left:1548px;top:31px;width:2px;height:2px;background:#9cdcfe;opacity:.32"></div><div style="position:absolute;left:1550px;top:31px;width:1px;height:2px;background:#d4d4d4;opacity:.32"></div><div style="position:absolute;left:1552px;top:31px;width:1px;height:2px;background:#d4d4d4;opacity:.32"></div><div style="position:absolute;left:1554px;top:31px;width:1px;height:2px;background:#b5cea8;opacity:.32"></div><div style="position:absolute;left:1555px;top:31px;width:1px;height:2px;background:#d4d4d4;opacity:.32"></div><div style="position:absolute;left:1540px;top:33px;width:1px;height:2px;background:#d4d4d4;opacity:.32"></div><div style="position:absolute;left:1544px;top:35px;width:6px;height:2px;background:#dcdcaa;opacity:.32"></div><div style="position:absolute;left:1550px;top:35px;width:1px;height:2px;background:#d4d4d4;opacity:.32"></div><div style="position:absolute;left:1551px;top:35px;width:13px;height:2px;background:#ce9178;opacity:.32"></div><div style="position:absolute;left:1564px;top:35px;width:2px;height:2px;background:#d7ba7d;opacity:.32"></div><div style="position:absolute;left:1566px;top:35px;width:1px;height:2px;background:#ce9178;opacity:.32"></div><div style="position:absolute;left:1567px;top:35px;width:2px;height:2px;background:#d4d4d4;opacity:.32"></div><div style="position:absolute;left:1540px;top:37px;width:1px;height:2px;background:#d4d4d4;opacity:.32"></div><div style="position:absolute;left:1540px;top:39px;width:2px;height:2px;background:#6a9955;opacity:.32"></div><div style="position:absolute;left:1543px;top:39px;width:10px;height:2px;background:#6a9955;opacity:.32"></div><div style="position:absolute;left:1540px;top:41px;width:3px;height:2px;background:#9cdcfe;opacity:.32"></div><div style="position:absolute;left:1544px;top:41px;width:1px;height:2px;background:#d4d4d4;opacity:.32"></div><div style="position:absolute;left:1546px;top:41px;width:4px;height:2px;background:#dcdcaa;opacity:.32"></div><div style="position:absolute;left:1550px;top:41px;width:3px;height:2px;background:#d4d4d4;opacity:.32"></div><div style="position:absolute;left:1540px;top:43px;width:2px;height:2px;background:#c586c0;opacity:.32"></div><div style="position:absolute;left:1542px;top:43px;width:1px;height:2px;background:#d4d4d4;opacity:.32"></div><div style="position:absolute;left:1543px;top:43px;width:3px;height:2px;background:#9cdcfe;opacity:.32"></div><div style="position:absolute;left:1547px;top:43px;width:1px;height:2px;background:#d4d4d4;opacity:.32"></div><div style="position:absolute;left:1549px;top:43px;width:1px;height:2px;background:#b5cea8;opacity:.32"></div><div style="position:absolute;left:1550px;top:43px;width:1px;height:2px;background:#d4d4d4;opacity:.32"></div><div style="position:absolute;left:1540px;top:45px;width:1px;height:2px;background:#d4d4d4;opacity:.32"></div><div style="position:absolute;left:1544px;top:47px;width:2px;height:2px;background:#6a9955;opacity:.32"></div><div style="position:absolute;left:1547px;top:47px;width:8px;height:2px;background:#6a9955;opacity:.32"></div><div style="position:absolute;left:1544px;top:49px;width:5px;height:2px;background:#dcdcaa;opacity:.32"></div><div style="position:absolute;left:1549px;top:49px;width:1px;height:2px;background:#d4d4d4;opacity:.32"></div><div style="position:absolute;left:1550px;top:49px;width:2px;height:2px;background:#9cdcfe;opacity:.32"></div><div style="position:absolute;left:1552px;top:49px;width:1px;height:2px;background:#d4d4d4;opacity:.32"></div><div style="position:absolute;left:1553px;top:49px;width:1px;height:2px;background:#b5cea8;opacity:.32"></div><div style="position:absolute;left:1554px;top:49px;width:2px;height:2px;background:#d4d4d4;opacity:.32"></div><div style="position:absolute;left:1557px;top:49px;width:5px;height:2px;background:#9cdcfe;opacity:.32"></div><div style="position:absolute;left:1562px;top:49px;width:1px;height:2px;background:#d4d4d4;opacity:.32"></div><div style="position:absolute;left:1564px;top:49px;width:6px;height:2px;background:#dcdcaa;opacity:.32"></div><div style="position:absolute;left:1570px;top:49px;width:1px;height:2px;background:#d4d4d4;opacity:.32"></div><div style="position:absolute;left:1571px;top:49px;width:5px;height:2px;background:#9cdcfe;opacity:.32"></div><div style="position:absolute;left:1576px;top:49px;width:3px;height:2px;background:#d4d4d4;opacity:.32"></div><div style="position:absolute;left:1544px;top:51px;width:2px;height:2px;background:#6a9955;opacity:.32"></div><div style="position:absolute;left:1547px;top:51px;width:14px;height:2px;background:#6a9955;opacity:.32"></div><div style="position:absolute;left:1544px;top:53px;width:4px;height:2px;background:#dcdcaa;opacity:.32"></div><div style="position:absolute;left:1548px;top:53px;width:2px;height:2px;background:#d4d4d4;opacity:.32"></div><div style="position:absolute;left:1550px;top:53px;width:4px;height:2px;background:#9cdcfe;opacity:.32"></div><div style="position:absolute;left:1554px;top:53px;width:2px;height:2px;background:#d4d4d4;opacity:.32"></div><div style="position:absolute;left:1540px;top:55px;width:1px;height:2px;background:#d4d4d4;opacity:.32"></div><div style="position:absolute;left:1540px;top:57px;width:4px;height:2px;background:#c586c0;opacity:.32"></div><div style="position:absolute;left:1545px;top:57px;width:2px;height:2px;background:#c586c0;opacity:.32"></div><div style="position:absolute;left:1547px;top:57px;width:1px;height:2px;background:#d4d4d4;opacity:.32"></div><div style="position:absolute;left:1548px;top:57px;width:3px;height:2px;background:#9cdcfe;opacity:.32"></div><div style="position:absolute;left:1552px;top:57px;width:2px;height:2px;background:#d4d4d4;opacity:.32"></div><div style="position:absolute;left:1555px;top:57px;width:1px;height:2px;background:#b5cea8;opacity:.32"></div><div style="position:absolute;left:1556px;top:57px;width:1px;height:2px;background:#d4d4d4;opacity:.32"></div><div style="position:absolute;left:1540px;top:59px;width:1px;height:2px;background:#d4d4d4;opacity:.32"></div><div style="position:absolute;left:1544px;top:61px;width:2px;height:2px;background:#6a9955;opacity:.32"></div><div style="position:absolute;left:1547px;top:61px;width:6px;height:2px;background:#6a9955;opacity:.32"></div><div style="position:absolute;left:1544px;top:63px;width:6px;height:2px;background:#dcdcaa;opacity:.32"></div><div style="position:absolute;left:1550px;top:63px;width:1px;height:2px;background:#d4d4d4;opacity:.32"></div><div style="position:absolute;left:1551px;top:63px;width:11px;height:2px;background:#ce9178;opacity:.32"></div><div style="position:absolute;left:1563px;top:63px;width:2px;height:2px;background:#ce9178;opacity:.32"></div><div style="position:absolute;left:1566px;top:63px;width:1px;height:2px;background:#ce9178;opacity:.32"></div><div style="position:absolute;left:1568px;top:63px;width:2px;height:2px;background:#9cdcfe;opacity:.32"></div><div style="position:absolute;left:1570px;top:63px;width:2px;height:2px;background:#d7ba7d;opacity:.32"></div><div style="position:absolute;left:1572px;top:63px;width:1px;height:2px;background:#ce9178;opacity:.32"></div><div style="position:absolute;left:1573px;top:63px;width:1px;height:2px;background:#d4d4d4;opacity:.32"></div><div style="position:absolute;left:1575px;top:63px;width:6px;height:2px;background:#dcdcaa;opacity:.32"></div><div style="position:absolute;left:1581px;top:63px;width:4px;height:2px;background:#d4d4d4;opacity:.32"></div><div style="position:absolute;left:1544px;top:65px;width:2px;height:2px;background:#6a9955;opacity:.32"></div><div style="position:absolute;left:1547px;top:65px;width:8px;height:2px;background:#6a9955;opacity:.32"></div><div style="position:absolute;left:1544px;top:67px;width:4px;height:2px;background:#dcdcaa;opacity:.32"></div><div style="position:absolute;left:1548px;top:67px;width:1px;height:2px;background:#d4d4d4;opacity:.32"></div><div style="position:absolute;left:1549px;top:67px;width:2px;height:2px;background:#9cdcfe;opacity:.32"></div><div style="position:absolute;left:1551px;top:67px;width:1px;height:2px;background:#d4d4d4;opacity:.32"></div><div style="position:absolute;left:1552px;top:67px;width:1px;height:2px;background:#b5cea8;opacity:.32"></div><div style="position:absolute;left:1553px;top:67px;width:2px;height:2px;background:#d4d4d4;opacity:.32"></div><div style="position:absolute;left:1556px;top:67px;width:5px;height:2px;background:#9cdcfe;opacity:.32"></div><div style="position:absolute;left:1561px;top:67px;width:1px;height:2px;background:#d4d4d4;opacity:.32"></div><div style="position:absolute;left:1563px;top:67px;width:6px;height:2px;background:#dcdcaa;opacity:.32"></div><div style="position:absolute;left:1569px;top:67px;width:1px;height:2px;background:#d4d4d4;opacity:.32"></div><div style="position:absolute;left:1570px;top:67px;width:5px;height:2px;background:#9cdcfe;opacity:.32"></div><div style="position:absolute;left:1575px;top:67px;width:3px;height:2px;background:#d4d4d4;opacity:.32"></div><div style="position:absolute;left:1544px;top:69px;width:6px;height:2px;background:#dcdcaa;opacity:.32"></div><div style="position:absolute;left:1550px;top:69px;width:1px;height:2px;background:#d4d4d4;opacity:.32"></div><div style="position:absolute;left:1551px;top:69px;width:10px;height:2px;background:#ce9178;opacity:.32"></div><div style="position:absolute;left:1561px;top:69px;width:2px;height:2px;background:#9cdcfe;opacity:.32"></div><div style="position:absolute;left:1563px;top:69px;width:2px;height:2px;background:#d7ba7d;opacity:.32"></div><div style="position:absolute;left:1565px;top:69px;width:1px;height:2px;background:#ce9178;opacity:.32"></div><div style="position:absolute;left:1566px;top:69px;width:1px;height:2px;background:#d4d4d4;opacity:.32"></div><div style="position:absolute;left:1568px;top:69px;width:5px;height:2px;background:#9cdcfe;opacity:.32"></div><div style="position:absolute;left:1573px;top:69px;width:2px;height:2px;background:#d4d4d4;opacity:.32"></div><div style="position:absolute;left:1540px;top:71px;width:1px;height:2px;background:#d4d4d4;opacity:.32"></div><div style="position:absolute;left:1540px;top:73px;width:6px;height:2px;background:#c586c0;opacity:.32"></div><div style="position:absolute;left:1547px;top:73px;width:1px;height:2px;background:#b5cea8;opacity:.32"></div><div style="position:absolute;left:1548px;top:73px;width:1px;height:2px;background:#d4d4d4;opacity:.32"></div><div style="position:absolute;left:1536px;top:75px;width:1px;height:2px;background:#d4d4d4;opacity:.32"></div></div>
      <div style="position:absolute;left:0;top:0;width:1528px;height:6px;box-shadow:inset 0 6px 6px -5px #000"></div>
      
    </div>
  </div>

  <div id="panel">
    <div class="ptab" style="left:20px">输出</div>
    <div class="ptab" style="left:65px">调试控制台</div>
    <div class="ptab" style="left:143px;color:#e7e7e7">终端</div>
    <div class="abs" style="left:141px;top:27px;width:26px;height:1px;background:#e7e7e7"></div>
    <svg class="abs" style="left:1437px;top:10px" width="16" height="16" viewBox="0 0 16 16" fill="none" stroke="#c5c5c5" stroke-width="1.1"><rect x="1.5" y="1.5" width="13" height="13"/><path d="M5.5 5L8.5 8L5.5 11"/></svg>
    <span class="abs" style="left:1457px;top:9.5px;color:#cccccc;font-size:11.4px;white-space:nowrap">bash - pipe</span>
    <svg class="abs" style="left:1522px;top:10px" width="16" height="16" viewBox="0 0 16 16" fill="none" stroke="#c5c5c5" stroke-width="1.1"><path d="M8 1.5V14.5M1.5 8H14.5"/></svg>
    <svg class="abs" style="left:1540px;top:10px" width="12" height="16" viewBox="0 0 12 16" fill="none" stroke="#c5c5c5" stroke-width="1"><path d="M2.5 6L6 9.5L9.5 6"/></svg>
    <svg class="abs" style="left:1562px;top:10px" width="16" height="16" viewBox="0 0 16 16" fill="none" stroke="#c5c5c5" stroke-width="1.1"><rect x="1.1" y="1.5" width="12.4" height="12.6"/><path d="M7.3 1.5V14.1"/></svg>
    <svg class="abs" style="left:1586.5px;top:10px" width="16" height="16" viewBox="0 0 16 16" fill="none" stroke="#c5c5c5" stroke-width="1.1"><path d="M3 4.5H13M6 4.5V2H10V4.5M4 4.5L4.6 14.5H11.4L12 4.5M6.5 6.5V12.5M9.5 6.5V12.5"/></svg>
    <svg class="abs" style="left:1613px;top:10px" width="16" height="16" viewBox="0 0 16 16" fill="none" stroke="#c5c5c5" stroke-width="1.1"><path d="M2.5 10.5L8 5L13.5 10.5"/></svg>
    <svg class="abs" style="left:1634px;top:10px" width="16" height="16" viewBox="0 0 16 16" fill="none" stroke="#c5c5c5" stroke-width="1.2"><path d="M3.5 3.5L12.5 12.5M12.5 3.5L3.5 12.5"/></svg>
    <div id="term"><div class="tl" style="top:0.00px"><span class="tc" style="left:0.00px;width:7.88px;color:#23d18b;font-weight:bold">l</span><span class="tc" style="left:7.88px;width:7.88px;color:#23d18b;font-weight:bold">m</span><span class="tc" style="left:15.75px;width:7.88px;color:#23d18b;font-weight:bold">o</span><span class="tc" style="left:23.62px;width:7.88px;color:#23d18b;font-weight:bold">s</span><span class="tc" style="left:31.50px;width:7.88px;color:#23d18b;font-weight:bold">@</span><span class="tc" style="left:39.38px;width:7.88px;color:#23d18b;font-weight:bold">l</span><span class="tc" style="left:47.25px;width:7.88px;color:#23d18b;font-weight:bold">m</span><span class="tc" style="left:55.12px;width:7.88px;color:#23d18b;font-weight:bold">o</span><span class="tc" style="left:63.00px;width:7.88px;color:#23d18b;font-weight:bold">s</span><span class="tc" style="left:70.88px;width:7.88px;color:#23d18b;font-weight:bold">-</span><span class="tc" style="left:78.75px;width:7.88px;color:#23d18b;font-weight:bold">P</span><span class="tc" style="left:86.62px;width:7.88px;color:#23d18b;font-weight:bold">C</span><span class="tc" style="left:94.50px;width:7.88px;color:#cccccc">:</span><span class="tc" style="left:102.38px;width:7.88px;color:#3b8eea;font-weight:bold">~</span><span class="tc" style="left:110.25px;width:7.88px;color:#3b8eea;font-weight:bold">/</span><span class="tc" style="left:118.12px;width:15.75px;color:#3b8eea;font-weight:bold">计</span><span class="tc" style="left:133.88px;width:15.75px;color:#3b8eea;font-weight:bold">算</span><span class="tc" style="left:149.62px;width:15.75px;color:#3b8eea;font-weight:bold">机</span><span class="tc" style="left:165.38px;width:15.75px;color:#3b8eea;font-weight:bold">基</span><span class="tc" style="left:181.12px;width:15.75px;color:#3b8eea;font-weight:bold">础</span><span class="tc" style="left:196.88px;width:7.88px;color:#3b8eea;font-weight:bold">/</span><span class="tc" style="left:204.75px;width:7.88px;color:#3b8eea;font-weight:bold">c</span><span class="tc" style="left:212.62px;width:7.88px;color:#3b8eea;font-weight:bold">o</span><span class="tc" style="left:220.50px;width:7.88px;color:#3b8eea;font-weight:bold">d</span><span class="tc" style="left:228.38px;width:7.88px;color:#3b8eea;font-weight:bold">e</span><span class="tc" style="left:236.25px;width:7.88px;color:#3b8eea;font-weight:bold">/</span><span class="tc" style="left:244.12px;width:7.88px;color:#3b8eea;font-weight:bold">2</span><span class="tc" style="left:252.00px;width:7.88px;color:#3b8eea;font-weight:bold">8</span><span class="tc" style="left:259.88px;width:7.88px;color:#3b8eea;font-weight:bold">/</span><span class="tc" style="left:267.75px;width:7.88px;color:#3b8eea;font-weight:bold">p</span><span class="tc" style="left:275.62px;width:7.88px;color:#3b8eea;font-weight:bold">i</span><span class="tc" style="left:283.50px;width:7.88px;color:#3b8eea;font-weight:bold">p</span><span class="tc" style="left:291.38px;width:7.88px;color:#3b8eea;font-weight:bold">e</span><span class="tc" style="left:299.25px;width:7.88px;color:#cccccc">$</span><span class="tc" style="left:315.00px;width:7.88px;color:#cccccc">m</span><span class="tc" style="left:322.88px;width:7.88px;color:#cccccc">a</span><span class="tc" style="left:330.75px;width:7.88px;color:#cccccc">k</span><span class="tc" style="left:338.62px;width:7.88px;color:#cccccc">e</span></div>
<div class="tl" style="top:15.70px"><span class="tc" style="left:0.00px;width:7.88px;color:#cccccc">C</span><span class="tc" style="left:7.88px;width:7.88px;color:#cccccc">C</span><span class="tc" style="left:23.62px;width:7.88px;color:#cccccc">-</span><span class="tc" style="left:31.50px;width:7.88px;color:#cccccc">[</span><span class="tc" style="left:39.38px;width:7.88px;color:#cccccc">M</span><span class="tc" style="left:47.25px;width:7.88px;color:#cccccc">]</span><span class="tc" style="left:63.00px;width:15.75px;color:#cccccc">正</span><span class="tc" style="left:78.75px;width:15.75px;color:#cccccc">在</span><span class="tc" style="left:94.50px;width:15.75px;color:#cccccc">构</span><span class="tc" style="left:110.25px;width:15.75px;color:#cccccc">建</span><span class="tc" style="left:126.00px;width:7.88px;color:#cccccc">.</span><span class="tc" style="left:133.88px;width:7.88px;color:#cccccc">.</span><span class="tc" style="left:141.75px;width:7.88px;color:#cccccc">.</span><span class="tc" style="left:157.50px;width:7.88px;color:#cccccc">m</span><span class="tc" style="left:165.38px;width:7.88px;color:#cccccc">a</span><span class="tc" style="left:173.25px;width:7.88px;color:#cccccc">i</span><span class="tc" style="left:181.12px;width:7.88px;color:#cccccc">n</span><span class="tc" style="left:189.00px;width:7.88px;color:#cccccc">.</span><span class="tc" style="left:196.88px;width:7.88px;color:#cccccc">c</span></div>
<div class="tl" style="top:31.40px"><span class="tc" style="left:0.00px;width:7.88px;color:#cccccc">C</span><span class="tc" style="left:7.88px;width:7.88px;color:#cccccc">C</span><span class="tc" style="left:23.62px;width:7.88px;color:#cccccc">-</span><span class="tc" style="left:31.50px;width:7.88px;color:#cccccc">[</span><span class="tc" style="left:39.38px;width:7.88px;color:#cccccc">M</span><span class="tc" style="left:47.25px;width:7.88px;color:#cccccc">]</span><span class="tc" style="left:63.00px;width:15.75px;color:#cccccc">正</span><span class="tc" style="left:78.75px;width:15.75px;color:#cccccc">在</span><span class="tc" style="left:94.50px;width:15.75px;color:#cccccc">构</span><span class="tc" style="left:110.25px;width:15.75px;color:#cccccc">建</span><span class="tc" style="left:126.00px;width:7.88px;color:#cccccc">.</span><span class="tc" style="left:133.88px;width:7.88px;color:#cccccc">.</span><span class="tc" style="left:141.75px;width:7.88px;color:#cccccc">.</span><span class="tc" style="left:157.50px;width:7.88px;color:#cccccc">m</span><span class="tc" style="left:165.38px;width:7.88px;color:#cccccc">a</span><span class="tc" style="left:173.25px;width:7.88px;color:#cccccc">i</span><span class="tc" style="left:181.12px;width:7.88px;color:#cccccc">n</span><span class="tc" style="left:189.00px;width:7.88px;color:#cccccc">.</span><span class="tc" style="left:196.88px;width:7.88px;color:#cccccc">e</span><span class="tc" style="left:204.75px;width:7.88px;color:#cccccc">l</span><span class="tc" style="left:212.62px;width:7.88px;color:#cccccc">f</span></div>
<div class="tl" style="top:47.10px"><span class="tc" style="left:0.00px;width:7.88px;color:#23d18b;font-weight:bold">l</span><span class="tc" style="left:7.88px;width:7.88px;color:#23d18b;font-weight:bold">m</span><span class="tc" style="left:15.75px;width:7.88px;color:#23d18b;font-weight:bold">o</span><span class="tc" style="left:23.62px;width:7.88px;color:#23d18b;font-weight:bold">s</span><span class="tc" style="left:31.50px;width:7.88px;color:#23d18b;font-weight:bold">@</span><span class="tc" style="left:39.38px;width:7.88px;color:#23d18b;font-weight:bold">l</span><span class="tc" style="left:47.25px;width:7.88px;color:#23d18b;font-weight:bold">m</span><span class="tc" style="left:55.12px;width:7.88px;color:#23d18b;font-weight:bold">o</span><span class="tc" style="left:63.00px;width:7.88px;color:#23d18b;font-weight:bold">s</span><span class="tc" style="left:70.88px;width:7.88px;color:#23d18b;font-weight:bold">-</span><span class="tc" style="left:78.75px;width:7.88px;color:#23d18b;font-weight:bold">P</span><span class="tc" style="left:86.62px;width:7.88px;color:#23d18b;font-weight:bold">C</span><span class="tc" style="left:94.50px;width:7.88px;color:#cccccc">:</span><span class="tc" style="left:102.38px;width:7.88px;color:#3b8eea;font-weight:bold">~</span><span class="tc" style="left:110.25px;width:7.88px;color:#3b8eea;font-weight:bold">/</span><span class="tc" style="left:118.12px;width:15.75px;color:#3b8eea;font-weight:bold">计</span><span class="tc" style="left:133.88px;width:15.75px;color:#3b8eea;font-weight:bold">算</span><span class="tc" style="left:149.62px;width:15.75px;color:#3b8eea;font-weight:bold">机</span><span class="tc" style="left:165.38px;width:15.75px;color:#3b8eea;font-weight:bold">基</span><span class="tc" style="left:181.12px;width:15.75px;color:#3b8eea;font-weight:bold">础</span><span class="tc" style="left:196.88px;width:7.88px;color:#3b8eea;font-weight:bold">/</span><span class="tc" style="left:204.75px;width:7.88px;color:#3b8eea;font-weight:bold">c</span><span class="tc" style="left:212.62px;width:7.88px;color:#3b8eea;font-weight:bold">o</span><span class="tc" style="left:220.50px;width:7.88px;color:#3b8eea;font-weight:bold">d</span><span class="tc" style="left:228.38px;width:7.88px;color:#3b8eea;font-weight:bold">e</span><span class="tc" style="left:236.25px;width:7.88px;color:#3b8eea;font-weight:bold">/</span><span class="tc" style="left:244.12px;width:7.88px;color:#3b8eea;font-weight:bold">2</span><span class="tc" style="left:252.00px;width:7.88px;color:#3b8eea;font-weight:bold">8</span><span class="tc" style="left:259.88px;width:7.88px;color:#3b8eea;font-weight:bold">/</span><span class="tc" style="left:267.75px;width:7.88px;color:#3b8eea;font-weight:bold">p</span><span class="tc" style="left:275.62px;width:7.88px;color:#3b8eea;font-weight:bold">i</span><span class="tc" style="left:283.50px;width:7.88px;color:#3b8eea;font-weight:bold">p</span><span class="tc" style="left:291.38px;width:7.88px;color:#3b8eea;font-weight:bold">e</span><span class="tc" style="left:299.25px;width:7.88px;color:#cccccc">$</span><span class="tc" style="left:315.00px;width:7.88px;color:#cccccc">m</span><span class="tc" style="left:322.88px;width:7.88px;color:#cccccc">a</span><span class="tc" style="left:330.75px;width:7.88px;color:#cccccc">k</span><span class="tc" style="left:338.62px;width:7.88px;color:#cccccc">e</span><span class="tc" style="left:354.38px;width:7.88px;color:#cccccc">r</span><span class="tc" style="left:362.25px;width:7.88px;color:#cccccc">u</span><span class="tc" style="left:370.12px;width:7.88px;color:#cccccc">n</span></div>
<div class="tl" style="top:62.80px"><span class="tc" style="left:0.00px;width:15.75px;color:#cccccc">这</span><span class="tc" style="left:15.75px;width:15.75px;color:#cccccc">是</span><span class="tc" style="left:31.50px;width:15.75px;color:#cccccc">子</span><span class="tc" style="left:47.25px;width:15.75px;color:#cccccc">进</span><span class="tc" style="left:63.00px;width:15.75px;color:#cccccc">程</span><span class="tc" style="left:86.62px;width:7.88px;color:#cccccc">i</span><span class="tc" style="left:94.50px;width:7.88px;color:#cccccc">d</span><span class="tc" style="left:110.25px;width:7.88px;color:#cccccc">=</span><span class="tc" style="left:126.00px;width:7.88px;color:#cccccc">3</span><span class="tc" style="left:133.88px;width:7.88px;color:#cccccc">3</span><span class="tc" style="left:141.75px;width:7.88px;color:#cccccc">6</span><span class="tc" style="left:149.62px;width:7.88px;color:#cccccc">3</span><span class="tc" style="left:157.50px;width:7.88px;color:#cccccc">1</span></div>
<div class="tl" style="top:78.50px"><span class="tc" style="left:0.00px;width:15.75px;color:#cccccc">管</span><span class="tc" style="left:15.75px;width:15.75px;color:#cccccc">道</span><span class="tc" style="left:31.50px;width:15.75px;color:#cccccc">输</span><span class="tc" style="left:47.25px;width:15.75px;color:#cccccc">出</span><span class="tc" style="left:63.00px;width:7.88px;color:#cccccc">:</span><span class="tc" style="left:70.88px;width:15.75px;color:#cccccc">这</span><span class="tc" style="left:86.62px;width:15.75px;color:#cccccc">是</span><span class="tc" style="left:102.38px;width:15.75px;color:#cccccc">父</span><span class="tc" style="left:118.12px;width:15.75px;color:#cccccc">进</span><span class="tc" style="left:133.88px;width:15.75px;color:#cccccc">程</span><span class="tc" style="left:157.50px;width:7.88px;color:#cccccc">i</span><span class="tc" style="left:165.38px;width:7.88px;color:#cccccc">d</span><span class="tc" style="left:181.12px;width:7.88px;color:#cccccc">=</span><span class="tc" style="left:196.88px;width:7.88px;color:#cccccc">3</span><span class="tc" style="left:204.75px;width:7.88px;color:#cccccc">3</span><span class="tc" style="left:212.62px;width:7.88px;color:#cccccc">6</span><span class="tc" style="left:220.50px;width:7.88px;color:#cccccc">3</span><span class="tc" style="left:228.38px;width:7.88px;color:#cccccc">0</span></div>
<div class="tl" style="top:94.20px"></div>
<div class="tl" style="top:109.90px"><span class="tc" style="left:0.00px;width:7.88px;color:#23d18b;font-weight:bold">l</span><span class="tc" style="left:7.88px;width:7.88px;color:#23d18b;font-weight:bold">m</span><span class="tc" style="left:15.75px;width:7.88px;color:#23d18b;font-weight:bold">o</span><span class="tc" style="left:23.62px;width:7.88px;color:#23d18b;font-weight:bold">s</span><span class="tc" style="left:31.50px;width:7.88px;color:#23d18b;font-weight:bold">@</span><span class="tc" style="left:39.38px;width:7.88px;color:#23d18b;font-weight:bold">l</span><span class="tc" style="left:47.25px;width:7.88px;color:#23d18b;font-weight:bold">m</span><span class="tc" style="left:55.12px;width:7.88px;color:#23d18b;font-weight:bold">o</span><span class="tc" style="left:63.00px;width:7.88px;color:#23d18b;font-weight:bold">s</span><span class="tc" style="left:70.88px;width:7.88px;color:#23d18b;font-weight:bold">-</span><span class="tc" style="left:78.75px;width:7.88px;color:#23d18b;font-weight:bold">P</span><span class="tc" style="left:86.62px;width:7.88px;color:#23d18b;font-weight:bold">C</span><span class="tc" style="left:94.50px;width:7.88px;color:#cccccc">:</span><span class="tc" style="left:102.38px;width:7.88px;color:#3b8eea;font-weight:bold">~</span><span class="tc" style="left:110.25px;width:7.88px;color:#3b8eea;font-weight:bold">/</span><span class="tc" style="left:118.12px;width:15.75px;color:#3b8eea;font-weight:bold">计</span><span class="tc" style="left:133.88px;width:15.75px;color:#3b8eea;font-weight:bold">算</span><span class="tc" style="left:149.62px;width:15.75px;color:#3b8eea;font-weight:bold">机</span><span class="tc" style="left:165.38px;width:15.75px;color:#3b8eea;font-weight:bold">基</span><span class="tc" style="left:181.12px;width:15.75px;color:#3b8eea;font-weight:bold">础</span><span class="tc" style="left:196.88px;width:7.88px;color:#3b8eea;font-weight:bold">/</span><span class="tc" style="left:204.75px;width:7.88px;color:#3b8eea;font-weight:bold">c</span><span class="tc" style="left:212.62px;width:7.88px;color:#3b8eea;font-weight:bold">o</span><span class="tc" style="left:220.50px;width:7.88px;color:#3b8eea;font-weight:bold">d</span><span class="tc" style="left:228.38px;width:7.88px;color:#3b8eea;font-weight:bold">e</span><span class="tc" style="left:236.25px;width:7.88px;color:#3b8eea;font-weight:bold">/</span><span class="tc" style="left:244.12px;width:7.88px;color:#3b8eea;font-weight:bold">2</span><span class="tc" style="left:252.00px;width:7.88px;color:#3b8eea;font-weight:bold">8</span><span class="tc" style="left:259.88px;width:7.88px;color:#3b8eea;font-weight:bold">/</span><span class="tc" style="left:267.75px;width:7.88px;color:#3b8eea;font-weight:bold">p</span><span class="tc" style="left:275.62px;width:7.88px;color:#3b8eea;font-weight:bold">i</span><span class="tc" style="left:283.50px;width:7.88px;color:#3b8eea;font-weight:bold">p</span><span class="tc" style="left:291.38px;width:7.88px;color:#3b8eea;font-weight:bold">e</span><span class="tc" style="left:299.25px;width:7.88px;color:#cccccc">$</span></div>
<div class="abs" style="left:316px;top:110.5px;width:7.5px;height:15px;background:#cccccc"></div></div>
  </div>

  <div id="status"><div class="abs" style="left:0;top:0;width:33px;height:22px;background:#16825d"></div>
    <svg class="abs" style="left:8px;top:3px" width="16" height="16" viewBox="0 0 16 16" fill="none" stroke="#fff" stroke-width="1.1"><path d="M4.5 5.4L8.7 9.3L4.8 13.2M13.4 2.3L9.4 6.2L13.4 10.4"/></svg>
    <svg class="abs" style="left:41px;top:4px" width="15" height="15" viewBox="0 0 16 16" fill="none" stroke="#fff" stroke-width="1.1"><circle cx="8" cy="8" r="6"/><path d="M5.5 5.5L10.5 10.5M10.5 5.5L5.5 10.5"/></svg>
    <span class="st" style="left:57px">0</span>
    <svg class="abs" style="left:66px;top:4px" width="15" height="15" viewBox="0 0 16 16" fill="none" stroke="#fff" stroke-width="1.1"><path d="M8 2L14.5 13.5H1.5Z"/><path d="M8 6V10M8 11.2V12.2"/></svg>
    <span class="st" style="left:83px">0</span>
    <span class="st" style="left:1530px">行 39，列 2</span>
    <span class="st" style="left:1607px">制表符长度: 4</span>
    <span class="st" style="left:1695px">UTF-8</span>
    <span class="st" style="left:1743px">LF</span>
    <span class="st" style="left:1772px">C</span>
    <span class="st" style="left:1796px">Linux</span>
    <svg class="abs" style="left:1840px;top:3px" width="16" height="16" viewBox="0 0 16 16" fill="none" stroke="#fff" stroke-width="1.1"><circle cx="7" cy="5.5" r="3"/><path d="M1.5 14C2 10 5 9 7 9M9.5 9.5L12 12L14.5 9.5"/></svg>
    <svg class="abs" style="left:1876px;top:3px" width="16" height="16" viewBox="0 0 16 16" fill="none" stroke="#fff" stroke-width="1.1"><path d="M3 12.5H13L11.5 10.5V7C11.5 4.5 10 3 8 3S4.5 4.5 4.5 7V10.5Z"/><path d="M6.5 14A1.5 1.5 0 0 0 9.5 14"/></svg>
    <div class="abs" style="left:1886px;top:3px;width:6px;height:6px;border-radius:3px;background:#fff"></div></div>
</div>
<div class="redbox" style="left:253px;top:310px;width:691px;height:413px"></div>
<div class="redbox" style="left:249px;top:847px;width:694px;height:61px"></div>
</body></html>
